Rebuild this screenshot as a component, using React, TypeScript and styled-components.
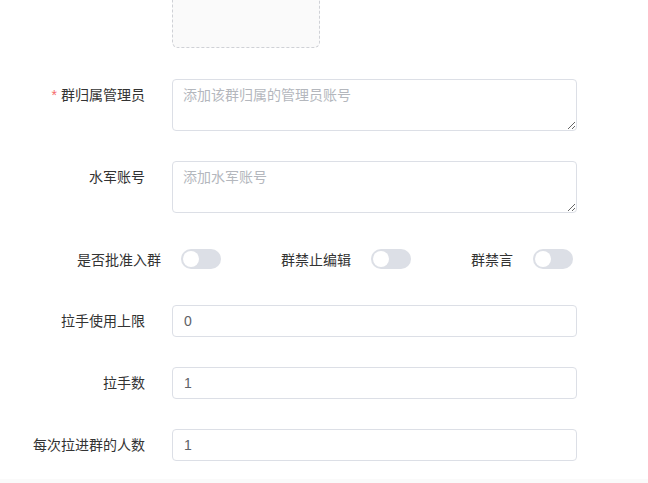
import styled, { createGlobalStyle } from 'styled-components';

const GlobalStyle = createGlobalStyle`
  html, body {
    margin: 0;
    padding: 0;
    background: #fff;
    overflow: hidden;
  }
  body {
    font-family: "Liberation Sans", "Noto Sans CJK SC", sans-serif;
    font-size: 14px;
    color: #333;
  }
`;

// the form is shown scrolled, with the upload box partly above the fold
const Page = styled.div`
  margin-top: -100px;
  width: 648px;
`;

const Form = styled.form`
  display: flex;
  flex-direction: column;
  gap: 30px;
`;

const Item = styled.div<{ $extra?: number }>`
  display: flex;
  align-items: flex-start;
  gap: 27px;
  margin-bottom: ${(p) => p.$extra || 0}px;
`;

const Label = styled.label`
  width: 145px;
  flex-shrink: 0;
  text-align: right;
  line-height: 32px;
  font-size: 14px;
  color: #333;
  white-space: nowrap;
`;

const Star = styled.span`
  color: #f56c6c;
  margin-right: 4px;
`;

const Upload = styled.div`
  width: 148px;
  height: 148px;
  box-sizing: border-box;
  border: 1px dashed #cfd1d6;
  border-radius: 6px;
  background: #fafafa;
`;

const TextArea = styled.textarea`
  width: 405px;
  height: 52px;
  box-sizing: border-box;
  padding: 5px 10px;
  border: 1px solid #dcdfe6;
  border-radius: 4px;
  font-family: inherit;
  font-size: 14px;
  line-height: 21px;
  color: #606266;
  outline: none;
  margin: 0;
  &::placeholder {
    color: #b4b7bd;
  }
`;

const Input = styled.input`
  width: 405px;
  height: 32px;
  box-sizing: border-box;
  padding: 0 11px;
  border: 1px solid #dcdfe6;
  border-radius: 4px;
  font-family: inherit;
  font-size: 14px;
  color: #606266;
  outline: none;
  margin: 0;
`;

const SwitchRow = styled.div`
  display: flex;
  align-items: center;
  height: 32px;
  padding-left: 77px;
  gap: 60px;
`;

const SwitchItem = styled.div`
  display: flex;
  align-items: center;
  gap: 20px;
  font-size: 14px;
  color: #333;
  white-space: nowrap;
`;

const Switch = styled.span<{ $on?: boolean }>`
  display: inline-block;
  position: relative;
  width: 40px;
  height: 20px;
  border-radius: 10px;
  background: ${(p) => (p.$on ? '#409eff' : '#dcdfe6')};
  &::after {
    content: '';
    position: absolute;
    top: 2px;
    left: ${(p) => (p.$on ? '22px' : '2px')};
    width: 16px;
    height: 16px;
    border-radius: 50%;
    background: #fff;
  }
`;

const Footer = styled.div`
  margin-top: 18px;
  height: 4px;
  background: #fafafa;
`;

const switches = ['是否批准入群', '群禁止编辑', '群禁言'];

const numberFields = [
  { label: '拉手使用上限', value: '0' },
  { label: '拉手数', value: '1' },
  { label: '每次拉进群的人数', value: '1' },
];

export default function App() {
  return (
    <>
      <GlobalStyle />
      <Page>
        <Form onSubmit={(e) => e.preventDefault()}>
          <Item $extra={1}>
            <Label />
            <Upload />
          </Item>
          <Item>
            <Label>
              <Star>*</Star>群归属管理员
            </Label>
            <TextArea placeholder="添加该群归属的管理员账号" />
          </Item>
          <Item>
            <Label>水军账号</Label>
            <TextArea placeholder="添加水军账号" />
          </Item>
          <SwitchRow>
            {switches.map((s) => (
              <SwitchItem key={s}>
                {s}
                <Switch />
              </SwitchItem>
            ))}
          </SwitchRow>
          {numberFields.map((f) => (
            <Item key={f.label}>
              <Label>{f.label}</Label>
              <Input defaultValue={f.value} />
            </Item>
          ))}
        </Form>
        <Footer />
      </Page>
    </>
  );
}
